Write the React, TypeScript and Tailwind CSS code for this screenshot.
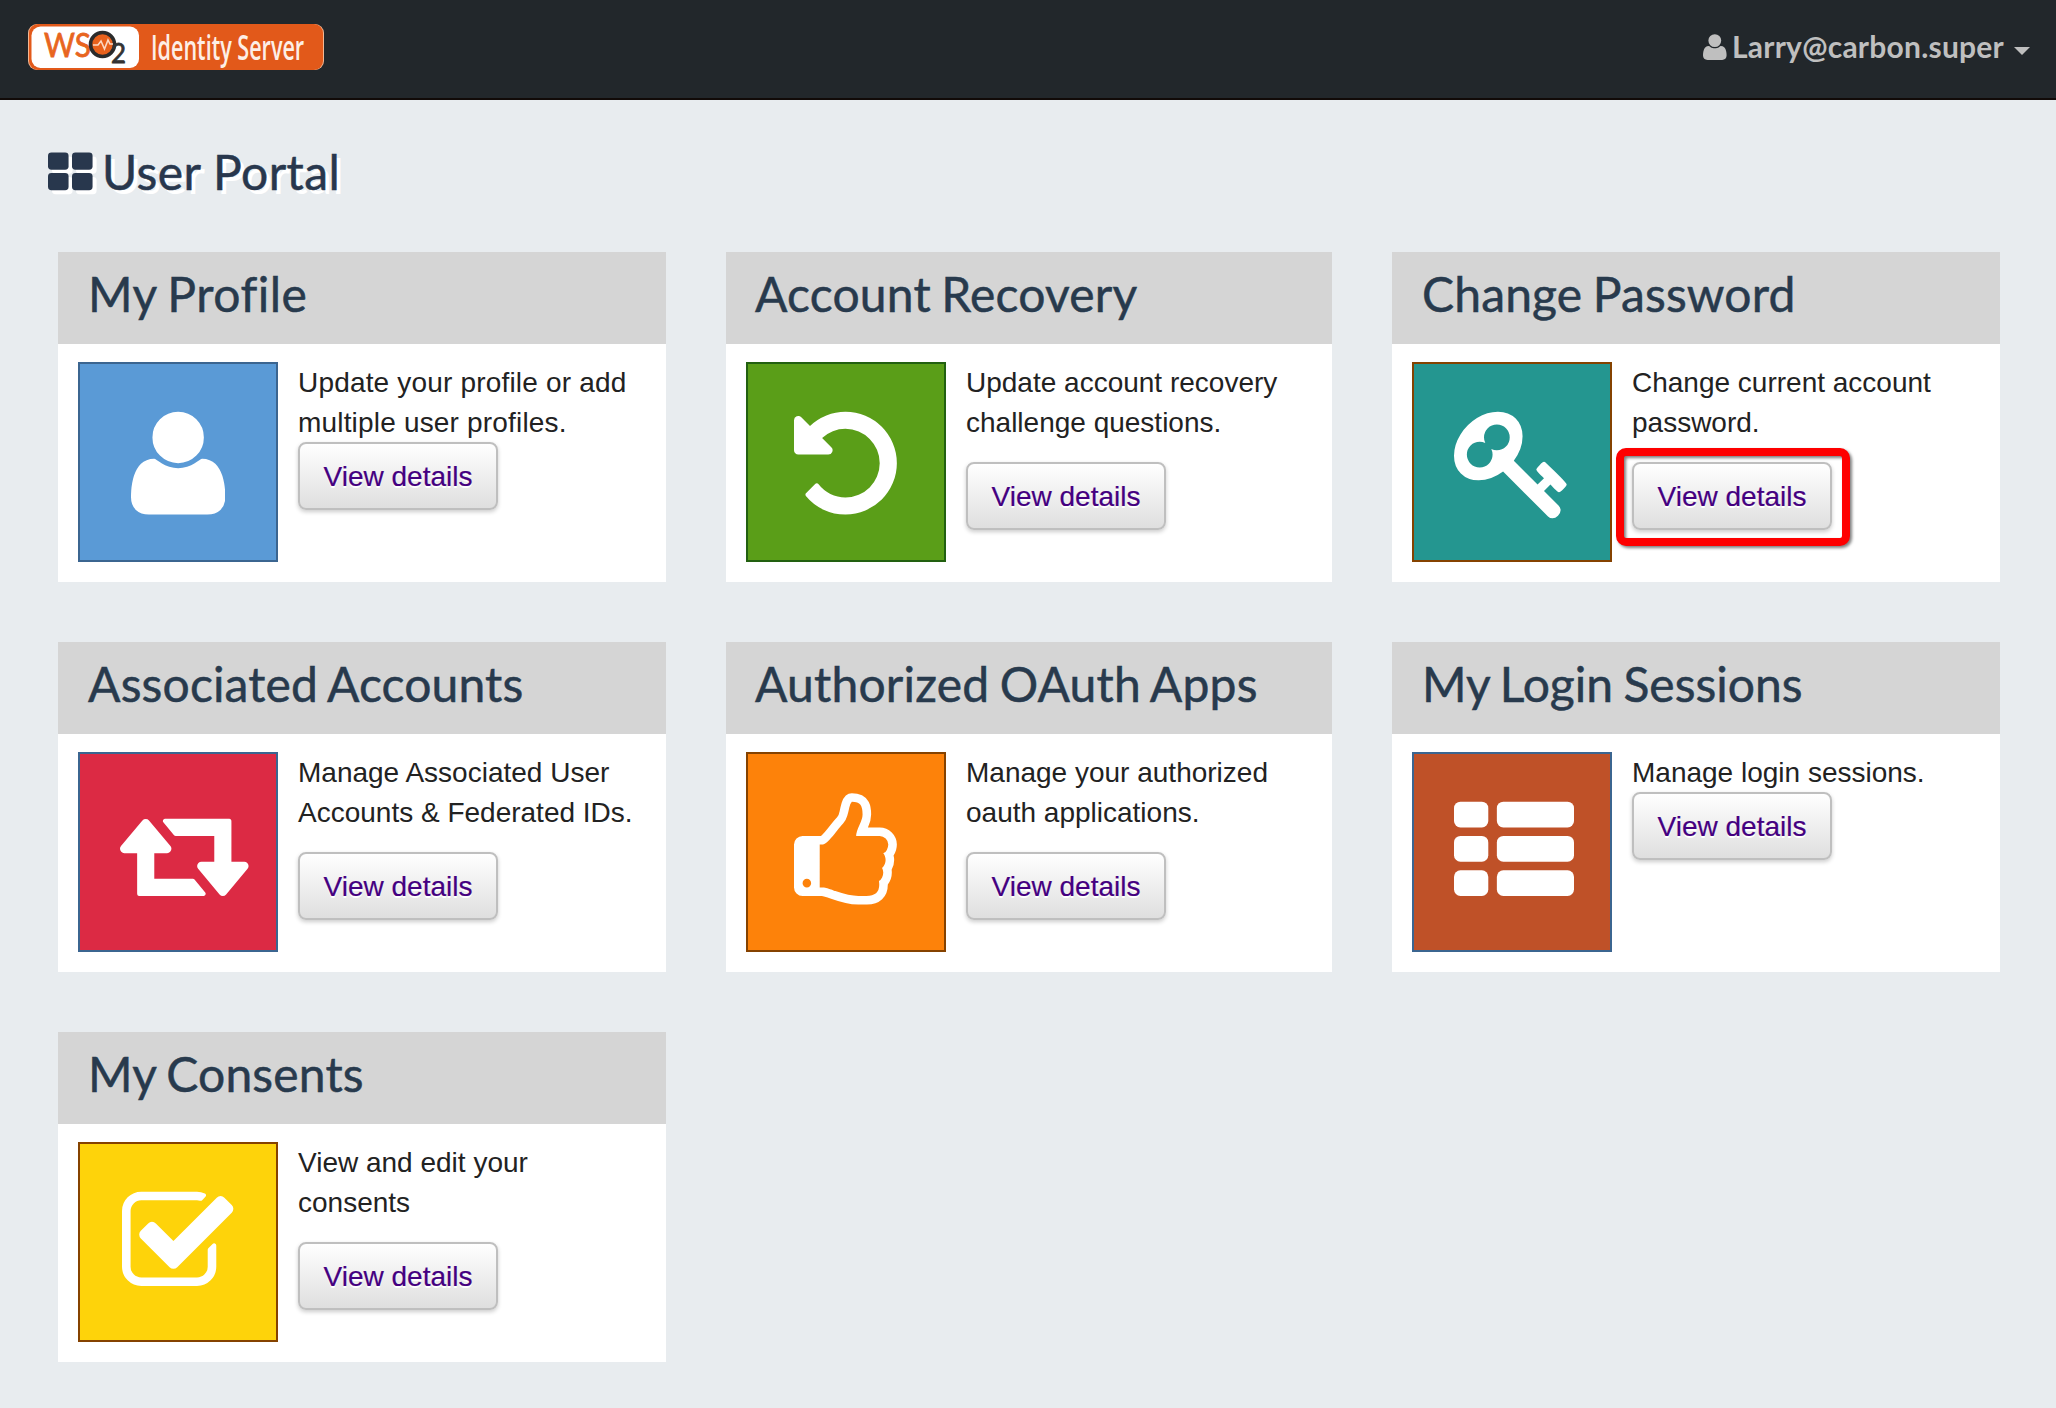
import type { ReactNode } from "react";

/** Places a glyph drawn on a 1792-unit em, y pointing up from the baseline. */
function Glyph({ units, className, children }: { units: number; className: string; children: ReactNode }) {
  return (
    <svg viewBox={`0 0 ${units} 1792`} className={className} fill="currentColor" aria-hidden="true">
      <g transform="translate(0 1538) scale(1 -1)">{children}</g>
    </svg>
  );
}

const userPath =
  "M1408 131q0 -120 -73 -189.5t-194 -69.5h-874q-121 0 -194 69.5t-73 189.5q0 53 3.5 103.5t14 109t26.5 108.5t43 97.5t62 81t85.5 53.5t111.5 20q9 0 42 -21.5t74.5 -48t108 -48t133.5 -21.5t133.5 21.5t108 48t74.5 48t42 21.5q61 0 111.5 -20t85.5 -53.5t62 -81t43 -97.5t26.5 -108.5t14 -109t3.5 -103.5zM1088 1024q0 -159 -112.5 -271.5t-271.5 -112.5t-271.5 112.5t-112.5 271.5t112.5 271.5t271.5 112.5t271.5 -112.5t112.5 -271.5z";
const undoPath =
  "M1536 640q0 -156 -61 -298t-164 -245t-245 -164t-298 -61q-172 0 -327 72.5t-264 204.5q-7 10 -6.5 22.5t8.5 20.5l137 138q10 9 25 9q16 -2 23 -12q73 -95 179 -147t225 -52q104 0 198.5 40.5t163.5 109.5t109.5 163.5t40.5 198.5t-40.5 198.5t-109.5 163.5t-163.5 109.5t-198.5 40.5q-98 0 -188 -35.5t-160 -101.5l137 -138q31 -30 14 -69q-17 -40 -59 -40h-448q-26 0 -45 19t-19 45v448q0 42 40 59q39 17 69 -14l130 -129q107 101 244.5 156.5t284.5 55.5q156 0 298 -61t245 -164t164 -245t61 -298z";
const keyPath =
  "M832 1024q0 80 -56 136t-136 56t-136 -56t-56 -136q0 -42 19 -83q-41 19 -83 19q-80 0 -136 -56t-56 -136t56 -136t136 -56t136 56t56 136q0 42 -19 83q41 -19 83 -19q80 0 136 56t56 136zM1683 320q0 -17 -49 -66t-66 -49q-9 0 -28.5 16t-36.5 33t-38.5 40t-24.5 26l-96 -96l220 -220q28 -28 28 -68q0 -42 -39 -81t-81 -39q-40 0 -68 28l-671 671q-176 -131 -365 -131q-163 0 -265.5 102.5t-102.5 265.5q0 160 95 313t248 248t313 95q163 0 265.5 -102.5t102.5 -265.5q0 -189 -131 -365l355 -355l96 96q-3 3 -26 24.5t-40 38.5t-33 36.5t-16 28.5q0 17 49 66t66 49q13 0 23 -10q6 -6 46 -44.5t82 -79.5t86.5 -86t73 -78t28.5 -41z";
const retweetPath =
  "M1280 32q0 -13 -9.5 -22.5t-22.5 -9.5h-960q-8 0 -13.5 2t-9 7t-5.5 8t-3 11.5t-1 11.5v13v11v160v416h-192q-26 0 -45 19t-19 45q0 24 15 41l320 384q19 22 49 22t49 -22l320 -384q15 -17 15 -41q0 -26 -19 -45t-45 -19h-192v-384h576q16 0 25 -11l160 -192q7 -10 7 -21zM1920 448q0 -24 -15 -41l-320 -384q-20 -23 -49 -23t-49 23l-320 384q-15 17 -15 41q0 26 19 45t45 19h192v384h-576q-16 0 -25 12l-160 192q-7 9 -7 20q0 13 9.5 22.5t22.5 9.5h960q8 0 13.5 -2t9 -7t5.5 -8t3 -11.5t1 -11.5v-13v-11v-160v-416h192q26 0 45 -19t19 -45z";
const thumbPath =
  "M256 192q0 26 -19 45t-45 19t-45 -19t-19 -45t19 -45t45 -19t45 19t19 45zM1408 768q0 51 -39 89.5t-89 38.5h-352q0 58 48 159.5t48 160.5q0 98 -32 145t-128 47q-26 -26 -38 -85t-30.5 -125.5t-59.5 -109.5q-22 -23 -77 -91q-4 -5 -23 -30t-31.5 -41t-34.5 -42.5t-40 -44t-38.5 -35.5t-40 -27t-35.5 -9h-32v-640h32q13 0 31.5 -3t33 -6.5t38 -11t35 -11.5t35.5 -12.5t29 -10.5q211 -73 342 -73h121q192 0 192 167q0 26 -5 56q30 16 47.5 52.5t17.5 73.5t-18 69q53 50 53 119q0 25 -10 55.5t-25 47.5q32 1 53.5 47t21.5 81zM1536 769q0 -89 -49 -163q9 -33 9 -69q0 -77 -38 -144q3 -21 3 -43q0 -101 -60 -178q1 -139 -85 -219.5t-227 -80.5h-36h-93q-96 0 -189.5 22.5t-216.5 65.5q-116 40 -138 40h-288q-53 0 -90.5 37.5t-37.5 90.5v640q0 53 37.5 90.5t90.5 37.5h274q36 24 137 155q58 75 107 128q24 25 35.5 85.5t30.5 126.5t62 108q39 37 90 37q84 0 151 -32.5t102 -101.5t35 -186q0 -93 -48 -192h176q104 0 180 -76t76 -179z";
const checkPath =
  "M1408 606v-318q0 -119 -84.5 -203.5t-203.5 -84.5h-832q-119 0 -203.5 84.5t-84.5 203.5v832q0 119 84.5 203.5t203.5 84.5h832q63 0 117 -25q15 -7 18 -23q3 -17 -9 -29l-49 -49q-10 -10 -23 -10q-3 0 -9 2q-23 6 -45 6h-832q-66 0 -113 -47t-47 -113v-832q0 -66 47 -113t113 -47h832q66 0 113 47t47 113v254q0 13 9 22l64 64q10 10 23 10q6 0 12 -3q20 -8 20 -29zM1639 1095l-814 -814q-24 -24 -57 -24t-57 24l-430 430q-24 24 -24 57t24 57l110 110q24 24 57 24t57 -24l263 -263l647 647q24 24 57 24t57 -24l110 -110q24 -24 24 -57t-24 -57z";

const listRows = [0, 512, 1024];

function Logo() {
  return (
    <svg viewBox="0 0 296 46" className="h-[46px] w-[296px]" role="img" aria-label="WSO2 Identity Server">
      <rect x="0" y="0" width="296" height="46" rx="9" fill="#f3b793" />
      <rect x="1" y="0" width="294" height="46" rx="9" fill="#e2591a" />
      <rect x="3.5" y="2.5" width="107.5" height="41.5" rx="9" fill="#fff" />
      <text x="16" y="32.5" fontFamily="Lato, sans-serif" fontSize="33" fill="#e8651f" stroke="#e8651f" strokeWidth="0.8" textLength="47" lengthAdjust="spacingAndGlyphs">
        WS
      </text>
      <circle cx="74.5" cy="20.5" r="12" fill="#e8611c" stroke="#2b2b2b" strokeWidth="3.6" />
      <path d="M65 21h5l3-4 3.5 8 3.5-9 2 4h3" fill="none" stroke="#fbd9c4" strokeWidth="1.6" />
      <text x="83" y="38.500" fontFamily="Lato, sans-serif" fontSize="27" fill="#333" stroke="#333" strokeWidth="0.8" textLength="15" lengthAdjust="spacingAndGlyphs">
        2
      </text>
      <g transform="translate(123 35.500) scale(0.62 1)">
        <text x="0" y="0" fontFamily="'Open Sans', sans-serif" fontSize="34" fontWeight="600" fill="#fdeee6" textLength="247" lengthAdjust="spacingAndGlyphs">
          Identity Server
        </text>
      </g>
    </svg>
  );
}

function DetailsButton() {
  return (
    <button className="block h-[68px] w-[200px] rounded-lg border-2 border-[#bfbfbf] bg-linear-to-b from-white to-[#dfdfdf] pt-0.5 text-[28px] leading-[40px] text-[#440080] shadow-[0_2px_4px_rgba(0,0,0,0.2)] [-webkit-text-stroke:0.2px_#440080] [text-shadow:0_2px_0_#fff]">
      View details
    </button>
  );
}

type Card = {
  title: string;
  tracking: string;
  lines: string[];
  lineTracking?: string;
  tile: string;
  icon: ReactNode;
  tight?: boolean;
  marked?: boolean;
};

const cards: Card[] = [
  {
    title: "My Profile",
    tracking: "tracking-[0.5px]",
    lines: ["Update your profile or add", "multiple user profiles."],
    lineTracking: "tracking-[0.18px]",
    tile: "border-[#3b6590] bg-[#5a9ad6]",
    tight: true,
    icon: <Glyph units={1408} className="h-[120px] w-[94.300px] shrink-0"><path d={userPath} /></Glyph>,
  },
  {
    title: "Account Recovery",
    tracking: "-indent-px tracking-[0.2px]",
    lines: ["Update account recovery", "challenge questions."],
    tile: "border-[#226010] bg-[#5a9e18]",
    icon: <Glyph units={1536} className="mr-px h-[120px] w-[102.860px] shrink-0"><path d={undoPath} /></Glyph>,
  },
  {
    title: "Change Password",
    tracking: "tracking-[0.15px]",
    lines: ["Change current account", "password."],
    tile: "border-[#854200] bg-[#249690]",
    marked: true,
    icon: <Glyph units={1792} className="h-[120px] w-[120px] shrink-0"><path d={keyPath} /></Glyph>,
  },
  {
    title: "Associated Accounts",
    tracking: "tracking-[0.15px]",
    lines: ["Manage Associated User", "Accounts & Federated IDs."],
    tile: "border-[#3b6590] bg-[#dc2a44]",
    icon: <Glyph units={1920} className="h-[120px] w-[128.570px] shrink-0"><path d={retweetPath} /></Glyph>,
  },
  {
    title: "Authorized OAuth Apps",
    tracking: "-indent-px tracking-[0.2px]",
    lines: ["Manage your authorized", "oauth applications."],
    tile: "border-[#854200] bg-[#fd820a]",
    icon: <Glyph units={1536} className="mr-px h-[120px] w-[102.860px] shrink-0 overflow-visible"><path d={thumbPath} /></Glyph>,
  },
  {
    title: "My Login Sessions",
    tracking: "tracking-normal",
    lines: ["Manage login sessions."],
    tile: "border-[#3b6590] bg-[#bf5128]",
    tight: true,
    icon: (
      <Glyph units={1792} className="h-[120px] w-[120px] shrink-0">
        {listRows.map((y) => (
          <g key={y}>
            <rect x="0" y={y} width="512" height="384" rx="96" />
            <rect x="640" y={y} width="1152" height="384" rx="96" />
          </g>
        ))}
      </Glyph>
    ),
  },
  {
    title: "My Consents",
    tracking: "tracking-[0.15px]",
    lines: ["View and edit your", "consents"],
    tile: "border-[#854200] bg-[#fed30a]",
    icon: <Glyph units={1664} className="h-[120px] w-[111.430px] shrink-0"><path d={checkPath} /></Glyph>,
  },
];

function PortalCard({ card }: { card: Card }) {
  return (
    <section className="bg-white">
      <h2 className={`h-[92px] bg-[#d5d5d5] pt-3 pl-[30px] font-[Lato,sans-serif] text-[48px] leading-[60px] text-[#283a4d] [-webkit-text-stroke:0.5px_#283a4d] [word-spacing:-2px] ${card.tracking}`}>
        {card.title}
      </h2>
      <div className="flex h-[238px] gap-5 px-5 pt-[18px]">
        <div className={`flex h-[200px] w-[200px] shrink-0 border-2 px-10 pt-[39px] text-white [justify-content:safe_center] ${card.tile}`}>
          {card.icon}
        </div>
        <div className="pt-px text-[28px] leading-[40px] text-[#222]">
          {card.lines.map((line) => (
            <p key={line} className={`whitespace-nowrap ${card.lineTracking ?? ""}`}>{line}</p>
          ))}
          <div className={`relative -top-px w-[200px] ${card.tight ? "" : "pt-5"}`}>
            <DetailsButton />
            {card.marked && (
              <div className="absolute top-[6px] -left-[16px] h-[98px] w-[234px] rounded-[10px] border-8 border-[#fe0000] [filter:drop-shadow(2px_2px_1.5px_rgba(0,0,0,0.5))]" />
            )}
          </div>
        </div>
      </div>
    </section>
  );
}

export default function App() {
  return (
    <div className="min-h-[1408px] w-[2056px] overflow-hidden bg-[#e8ecef] font-['Liberation_Sans',Arial,sans-serif] [font-variant-ligatures:none]">
      <header className="flex h-[100px] justify-between border-b-2 border-[#110a08] bg-[#22272b] pr-[26px] pl-7">
        <div className="pt-6">
          <Logo />
        </div>
        <div className="flex h-[98px] items-center pb-1 font-[Lato,sans-serif] text-[30px] font-bold text-[#bfbfbf]">
          <Glyph units={1408} className="mr-[5.500px] h-[30px] w-[23.600px]"><path d={userPath} /></Glyph>
          <span className="mb-0.5 tracking-[0.23px]">Larry@carbon.super</span>
          <span className="mt-[7px] ml-[10px] border-x-8 border-t-8 border-x-transparent border-t-[#bfbfbf]" />
        </div>
      </header>
      <main>
        <h1 className="flex h-[152px] pt-[42px] pl-12 font-[Lato,sans-serif] text-[48px] leading-[60px] tracking-[0.4px] text-[#28374d] [-webkit-text-stroke:0.5px_#28374d] [text-shadow:4px_4px_0_#fff]">
          <Glyph units={1664} className="mt-[7px] mr-[9.500px] h-[48px] w-[44.570px] [filter:drop-shadow(4px_4px_0_#fff)]">
            <rect x="0" y="0" width="768" height="640" rx="128" />
            <rect x="896" y="0" width="768" height="640" rx="128" />
            <rect x="0" y="768" width="768" height="640" rx="128" />
            <rect x="896" y="768" width="768" height="640" rx="128" />
          </Glyph>
          User Portal
        </h1>
        <div className="grid grid-cols-[608px_606px_608px] gap-[60px] pl-[58px]">
          {cards.map((card) => (
            <PortalCard key={card.title} card={card} />
          ))}
        </div>
      </main>
    </div>
  );
}
